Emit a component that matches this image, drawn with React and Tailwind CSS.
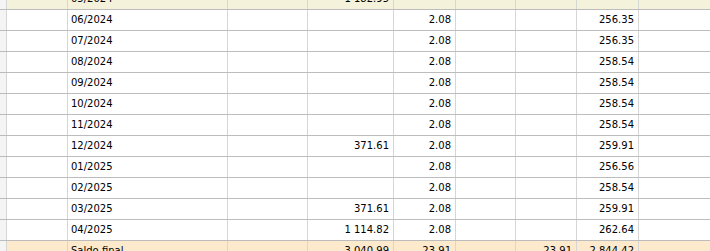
import React from "react";

const rows = [
  ["06/2024", "", "2.08", "", "256.35"],
  ["07/2024", "", "2.08", "", "256.35"],
  ["08/2024", "", "2.08", "", "258.54"],
  ["09/2024", "", "2.08", "", "258.54"],
  ["10/2024", "", "2.08", "", "258.54"],
  ["11/2024", "", "2.08", "", "258.54"],
  ["12/2024", "371.61", "2.08", "", "259.91"],
  ["01/2025", "", "2.08", "", "256.56"],
  ["02/2025", "", "2.08", "", "258.54"],
  ["03/2025", "371.61", "2.08", "", "259.91"],
  ["04/2025", "1 114.82", "2.08", "", "262.64"],
];

function Row({ cells, bg = "bg-white" }) {
  const [date, amount, fee, paid, balance] = cells;
  return (
    <div className="flex h-[21px] border-b border-[#bcbcbc] shrink-0">
      <div className="w-[7px] shrink-0 bg-[#f4f4f4] border-r border-[#d6d6d6]" />
      <div className={`w-[61px] shrink-0 border-r border-[#d6d6d6] ${bg}`} />
      <div className={`w-[160px] shrink-0 border-r border-[#d6d6d6] pl-[3px] flex items-center ${bg}`}>
        {date}
      </div>
      <div className={`w-[80px] shrink-0 border-r border-[#d6d6d6] ${bg}`} />
      <div className={`w-[86px] shrink-0 border-r border-[#d6d6d6] pr-[4px] flex items-center justify-end ${bg}`}>
        {amount}
      </div>
      <div className={`w-[62px] shrink-0 border-r border-[#d6d6d6] pr-[4px] flex items-center justify-end ${bg}`}>
        {fee}
      </div>
      <div className={`w-[60px] shrink-0 border-r border-[#d6d6d6] ${bg}`} />
      <div className={`w-[61px] shrink-0 border-r border-[#d6d6d6] pr-[4px] flex items-center justify-end ${bg}`}>
        {paid}
      </div>
      <div className={`w-[62px] shrink-0 border-r border-[#d6d6d6] pr-[4px] flex items-center justify-end ${bg}`}>
        {balance}
      </div>
      <div className={`flex-1 ${bg}`} />
    </div>
  );
}

export default function App() {
  return (
    <div
      className="w-[710px] h-[251px] overflow-hidden bg-white text-black text-[10px] leading-none"
      style={{ fontFamily: '"DejaVu Sans", Verdana, sans-serif' }}
    >
      <div className="-mt-[11px] flex flex-col">
        <Row cells={["05/2024", "1 182.95", "", "", ""]} bg="bg-[#f4f2da]" />
        {rows.map((r) => (
          <Row key={r[0]} cells={r} />
        ))}
        <Row cells={["Saldo final", "3 040.99", "23.91", "23.91", "2 844.42"]} bg="bg-[#fde9cc]" />
      </div>
    </div>
  );
}
